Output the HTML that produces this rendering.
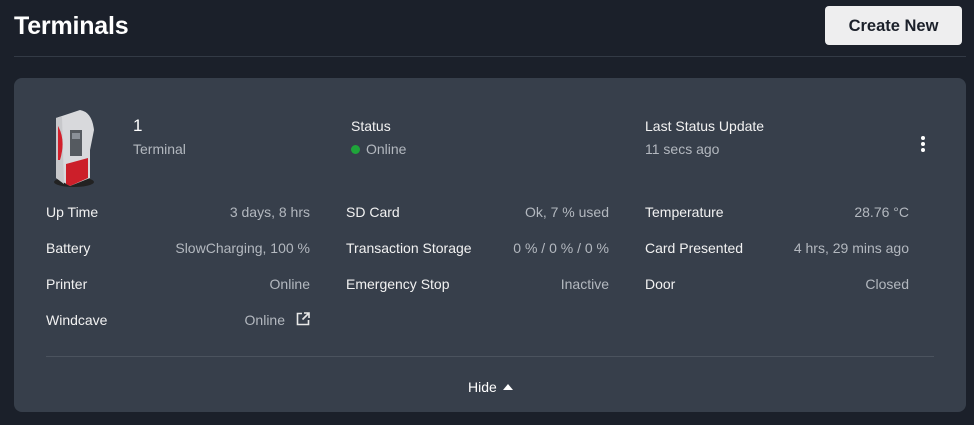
<!DOCTYPE html>
<html><head><style>
*{margin:0;padding:0;box-sizing:border-box}
body{width:974px;height:425px;background:#1b202a;font-family:"Liberation Sans",sans-serif;color:#fff;position:relative;overflow:hidden}
.abs{position:absolute;white-space:nowrap}
h1{position:absolute;left:14px;top:12px;font-size:25px;font-weight:bold;letter-spacing:-0.2px}
.btn{position:absolute;left:825px;top:6px;width:137px;height:39px;background:#eeeeef;border-radius:4px;color:#1b202a;font-size:16.5px;font-weight:bold;text-align:center;line-height:40px}
.hr{position:absolute;left:14px;top:56px;width:952px;height:1px;background:#333a45}
.card{position:absolute;left:14px;top:78px;width:952px;height:334px;background:#373f4b;border-radius:8px}
.l{font-size:14px;color:#f2f2f2}
.v{font-size:14px;color:#b3b8bf;text-align:right}
.sub{font-size:14px;color:#b3b8bf}
</style></head><body>
<h1>Terminals</h1>
<div class="btn">Create New</div>
<div class="hr"></div>
<div class="card"></div>
<svg class="abs" style="left:50px;top:100px" width="50" height="88" viewBox="0 0 50 88">
<ellipse cx="24" cy="82" rx="20" ry="5" fill="#222"/>
<path d="M6 18 L30 10 Q42 12 44 30 L40 50 L40 78 L20 86 L6 78 Z" fill="#d8d9dc"/>
<path d="M6 18 L12 16 L14 84 L6 78Z" fill="#c7c8cb"/>
<path d="M8 26 Q16 40 10 60 L8 60Z" fill="#d21f2b"/>
<path d="M16 64 L38 58 L38 78 L20 86 L16 84Z" fill="#cc1f2a"/>
<rect x="20" y="30" width="12" height="26" fill="#555a60"/>
<rect x="22" y="33" width="8" height="6" fill="#8a9098"/>
</svg>
<div class="abs" style="left:133px;top:116px;font-size:17px">1</div>
<div class="abs sub" style="left:133px;top:141px">Terminal</div>
<div class="abs l" style="left:351px;top:118px">Status</div>
<div class="abs sub" style="left:351px;top:141px"><span style="display:inline-block;width:9px;height:9px;border-radius:50%;background:#1fa53a;margin-right:6px"></span>Online</div>
<div class="abs l" style="left:645px;top:118px">Last Status Update</div>
<div class="abs sub" style="left:645px;top:141px">11 secs ago</div>
<div class="abs" style="left:921px;top:136px;width:4px;height:4px;border-radius:50%;background:#fff;box-shadow:0 6px 0 #fff,0 12px 0 #fff"></div>

<div class="abs l" style="left:46px;top:204px">Up Time</div><div class="abs v" style="right:664px;top:204px">3 days, 8 hrs</div>
<div class="abs l" style="left:46px;top:240px">Battery</div><div class="abs v" style="right:664px;top:240px">SlowCharging, 100 %</div>
<div class="abs l" style="left:46px;top:276px">Printer</div><div class="abs v" style="right:664px;top:276px">Online</div>
<div class="abs l" style="left:46px;top:312px">Windcave</div><div class="abs v" style="right:689px;top:312px">Online</div>
<svg class="abs" style="left:296px;top:312px" width="14" height="14" viewBox="0 0 14 14" fill="none" stroke="#e8e8e8" stroke-width="1.6"><path d="M6 1.5H1.5V12.5H12.5V8"/><path d="M8 1H13V6M13 1L6.5 7.5"/></svg>

<div class="abs l" style="left:346px;top:204px">SD Card</div><div class="abs v" style="right:365px;top:204px">Ok, 7 % used</div>
<div class="abs l" style="left:346px;top:240px">Transaction Storage</div><div class="abs v" style="right:365px;top:240px">0 % / 0 % / 0 %</div>
<div class="abs l" style="left:346px;top:276px">Emergency Stop</div><div class="abs v" style="right:365px;top:276px">Inactive</div>

<div class="abs l" style="left:645px;top:204px">Temperature</div><div class="abs v" style="right:65px;top:204px">28.76 °C</div>
<div class="abs l" style="left:645px;top:240px">Card Presented</div><div class="abs v" style="right:65px;top:240px">4 hrs, 29 mins ago</div>
<div class="abs l" style="left:645px;top:276px">Door</div><div class="abs v" style="right:65px;top:276px">Closed</div>

<div class="abs" style="left:46px;top:356px;width:888px;height:1px;background:#4b535e"></div>
<div class="abs" style="left:468px;top:379px;font-size:14px;color:#fff">Hide <span style="display:inline-block;width:0;height:0;border-left:5px solid transparent;border-right:5px solid transparent;border-bottom:6px solid #fff;vertical-align:2px;margin-left:2px"></span></div>
</body></html>
